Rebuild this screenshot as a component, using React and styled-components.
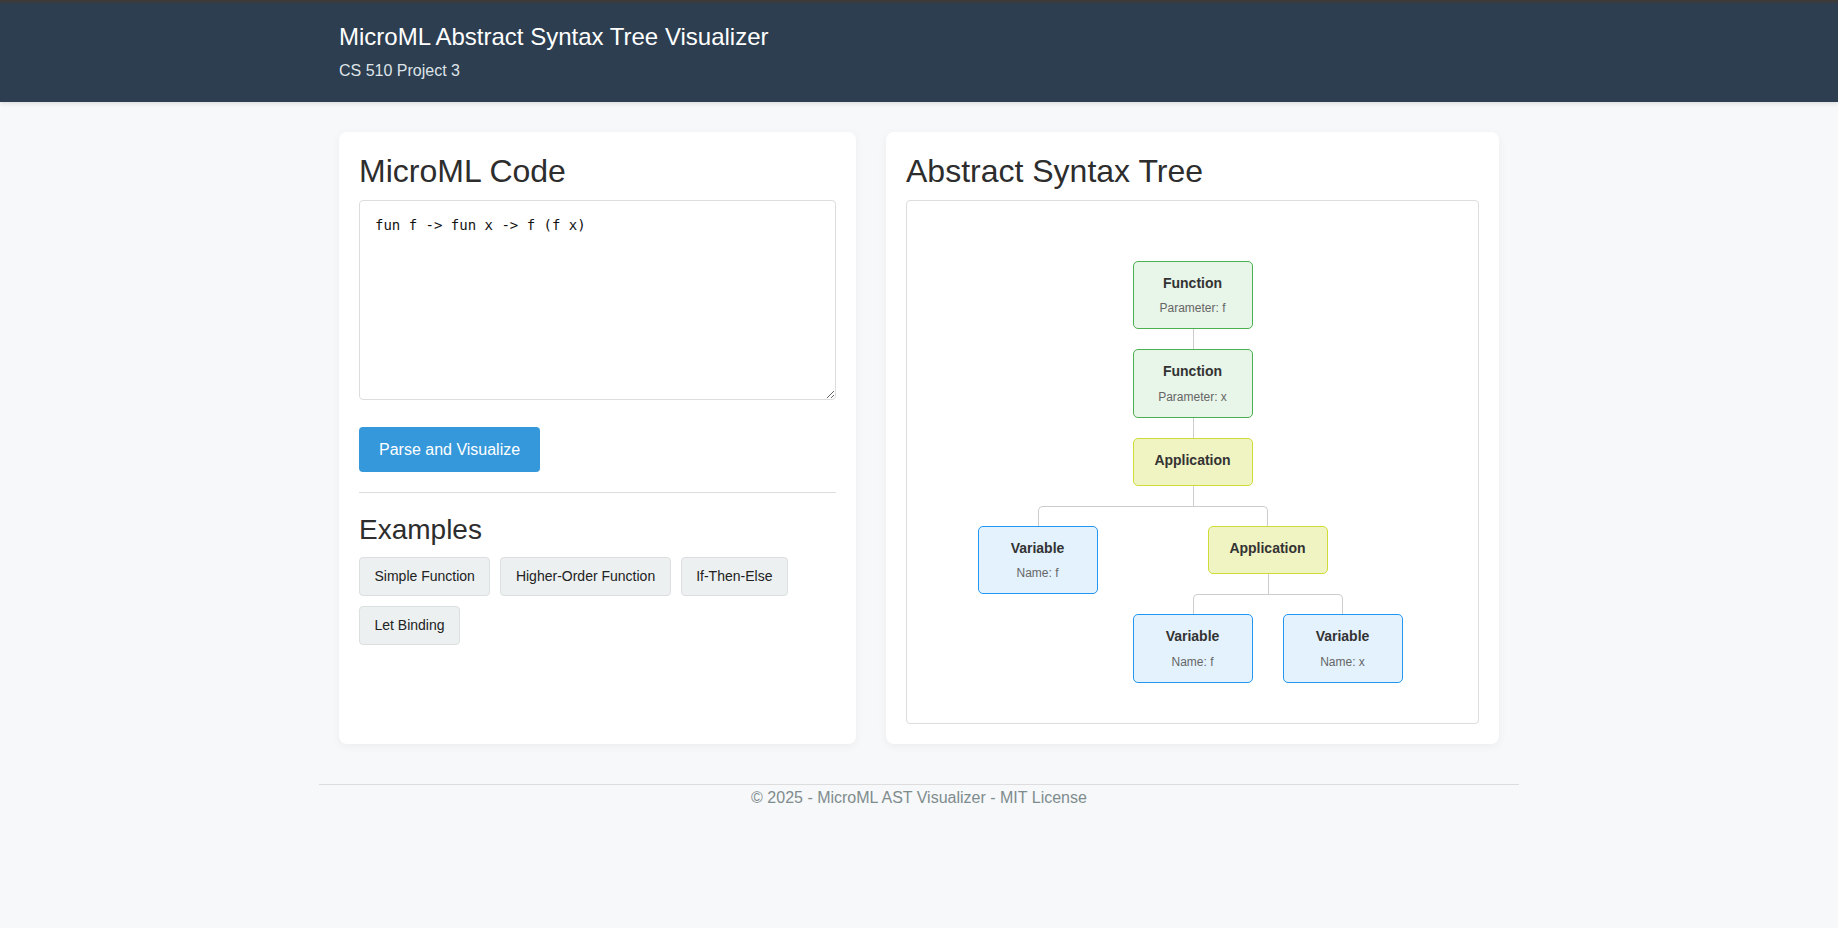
import React from "react";
import styled, { createGlobalStyle } from "styled-components";

const GlobalStyle = createGlobalStyle`
  *, *::before, *::after { box-sizing: border-box; }
  html, body {
    margin: 0;
    padding: 0;
    background: #f6f8fa;
    min-height: 100%;
  }
  body {
    font-family: "Liberation Sans", Arial, sans-serif;
    font-size: 16px;
    line-height: 1.6;
    color: #333;
  }
`;

const Header = styled.header`
  background: #2c3e50;
  color: #ffffff;
  border-top: 3px solid #3b3b3b;
  padding: 20px 0 19px;
  box-shadow: 0 2px 4px rgba(0, 0, 0, 0.1);
`;

const Container = styled.div`
  max-width: 1200px;
  margin: 0 auto;
  padding: 0 20px;
`;

const Title = styled.h1`
  margin: 0 0 6px;
  font-size: 24px;
  font-weight: normal;
  line-height: 1.2;
`;

const Subtitle = styled.p`
  margin: 0;
  font-size: 16px;
  line-height: 1.6;
  color: #dfe4e8;
`;

const Main = styled.main`
  max-width: 1200px;
  margin: 30px auto 0;
  padding: 0 20px;
  display: grid;
  grid-template-columns: 517fr 613fr;
  gap: 30px;
  align-items: stretch;
`;

const Card = styled.section`
  background: #ffffff;
  border-radius: 8px;
  padding: 20px;
  box-shadow: 0 2px 10px rgba(0, 0, 0, 0.05);
  display: flex;
  flex-direction: column;
`;

const CardTitle = styled.h2`
  margin: 0 0 9px;
  font-size: 32px;
  font-weight: normal;
  line-height: 1.2;
  color: #2d2d2d;
`;

const CodeInput = styled.textarea`
  display: block;
  width: 100%;
  height: 200px;
  margin: 0 0 27px;
  padding: 15px;
  border: 1px solid #ddd;
  border-radius: 4px;
  font-family: "DejaVu Sans Mono", monospace;
  font-size: 14px;
  line-height: 1.4;
  color: #111;
  background: #fff;
`;

const PrimaryButton = styled.button`
  align-self: flex-start;
  background: #3498db;
  color: #ffffff;
  border: none;
  border-radius: 4px;
  padding: 10px 20px;
  font-family: "Liberation Sans", Arial, sans-serif;
  font-size: 16px;
  line-height: 1.6;
  cursor: pointer;
`;

const ExamplesSection = styled.div`
  margin-top: 20px;
  padding-top: 20px;
  border-top: 1px solid #ddd;
`;

const SectionTitle = styled.h3`
  margin: 0 0 10px;
  font-size: 28px;
  font-weight: normal;
  line-height: 1.2;
  color: #2d2d2d;
`;

const ExampleRow = styled.div`
  display: flex;
  flex-wrap: wrap;
  gap: 10px;
`;

const ExampleButton = styled.button`
  background: #ecf0f1;
  color: #222;
  border: 1px solid #dcdfe0;
  border-radius: 4px;
  padding: 8px 14.5px;
  font-family: "Liberation Sans", Arial, sans-serif;
  font-size: 14px;
  line-height: 21px;
  cursor: pointer;
`;

const TreeBox = styled.div`
  border: 1px solid #ddd;
  border-radius: 4px;
  padding: 20px;
  overflow: auto;
  background: #fff;
`;

const TreeCanvas = styled.div`
  padding: 20px;
`;

const TreeList = styled.ul`
  display: flex;
  justify-content: center;
  align-items: flex-start;
  position: relative;
  margin: 0;
  padding: 20px 0 0;
  list-style: none;
`;

const ChildList = styled(TreeList)`
  &::before {
    content: "";
    position: absolute;
    top: 0;
    left: 50%;
    width: 0;
    height: 20px;
    border-left: 1px solid #ccc;
  }
`;

const TreeItem = styled.li`
  position: relative;
  display: flex;
  flex-direction: column;
  align-items: center;
  padding: 20px 5px 0;

  &::before,
  &::after {
    content: "";
    position: absolute;
    top: 0;
    right: 50%;
    width: 50%;
    height: 20px;
    border-top: 1px solid #ccc;
  }
  &::after {
    right: auto;
    left: 50%;
    border-left: 1px solid #ccc;
  }
  &:only-child {
    padding-top: 0;
  }
  &:only-child::before,
  &:only-child::after {
    display: none;
  }
  &:first-child::before,
  &:last-child::after {
    border: 0 none;
  }
  &:last-child::before {
    border-right: 1px solid #ccc;
    border-radius: 0 5px 0 0;
  }
  &:first-child::after {
    border-radius: 5px 0 0 0;
  }
`;

const nodeColors = {
  fn: { bg: "#e8f5e9", border: "#4caf50" },
  app: { bg: "#f0f4c3", border: "#cddc39" },
  var: { bg: "#e3f2fd", border: "#2196f3" },
};

const Node = styled.div`
  width: 120px;
  margin: 0 10px;
  padding: 10px;
  border: 1px solid ${(p) => nodeColors[p.$kind].border};
  background: ${(p) => nodeColors[p.$kind].bg};
  border-radius: 5px;
  text-align: center;
`;

const NodeLabel = styled.div`
  font-weight: bold;
  font-size: 14px;
  line-height: 22.4px;
  margin-bottom: 4px;
  color: #333;
`;

const NodeDetail = styled.div`
  font-size: 12px;
  line-height: 20px;
  color: #666;
`;

const Footer = styled.footer`
  max-width: 1200px;
  margin: 40px auto 0;
  padding: 0 0 20px;
  border-top: 1px solid #ddd;
  text-align: center;
  color: #7f8c8d;
  font-size: 16px;
  line-height: 1.6;
`;

const ast = {
  type: "Function",
  kind: "fn",
  detail: "Parameter: f",
  children: [
    {
      type: "Function",
      kind: "fn",
      detail: "Parameter: x",
      children: [
        {
          type: "Application",
          kind: "app",
          children: [
            { type: "Variable", kind: "var", detail: "Name: f" },
            {
              type: "Application",
              kind: "app",
              children: [
                { type: "Variable", kind: "var", detail: "Name: f" },
                { type: "Variable", kind: "var", detail: "Name: x" },
              ],
            },
          ],
        },
      ],
    },
  ],
};

function TreeNode({ node }) {
  return (
    <TreeItem>
      <Node $kind={node.kind}>
        <NodeLabel>{node.type}</NodeLabel>
        {node.detail && <NodeDetail>{node.detail}</NodeDetail>}
      </Node>
      {node.children && node.children.length > 0 && (
        <ChildList>
          {node.children.map((c, i) => (
            <TreeNode key={i} node={c} />
          ))}
        </ChildList>
      )}
    </TreeItem>
  );
}

const examples = ["Simple Function", "Higher-Order Function", "If-Then-Else", "Let Binding"];

export default function App() {
  return (
    <>
      <GlobalStyle />
      <Header>
        <Container>
          <Title>MicroML Abstract Syntax Tree Visualizer</Title>
          <Subtitle>CS 510 Project 3</Subtitle>
        </Container>
      </Header>
      <Main>
        <Card>
          <CardTitle>MicroML Code</CardTitle>
          <CodeInput defaultValue="fun f -> fun x -> f (f x)" spellCheck={false} />
          <PrimaryButton>Parse and Visualize</PrimaryButton>
          <ExamplesSection>
            <SectionTitle>Examples</SectionTitle>
            <ExampleRow>
              {examples.map((e) => (
                <ExampleButton key={e}>{e}</ExampleButton>
              ))}
            </ExampleRow>
          </ExamplesSection>
        </Card>
        <Card>
          <CardTitle>Abstract Syntax Tree</CardTitle>
          <TreeBox>
            <TreeCanvas>
              <TreeList>
                <TreeNode node={ast} />
              </TreeList>
            </TreeCanvas>
          </TreeBox>
        </Card>
      </Main>
      <Footer>© 2025 - MicroML AST Visualizer - MIT License</Footer>
    </>
  );
}
